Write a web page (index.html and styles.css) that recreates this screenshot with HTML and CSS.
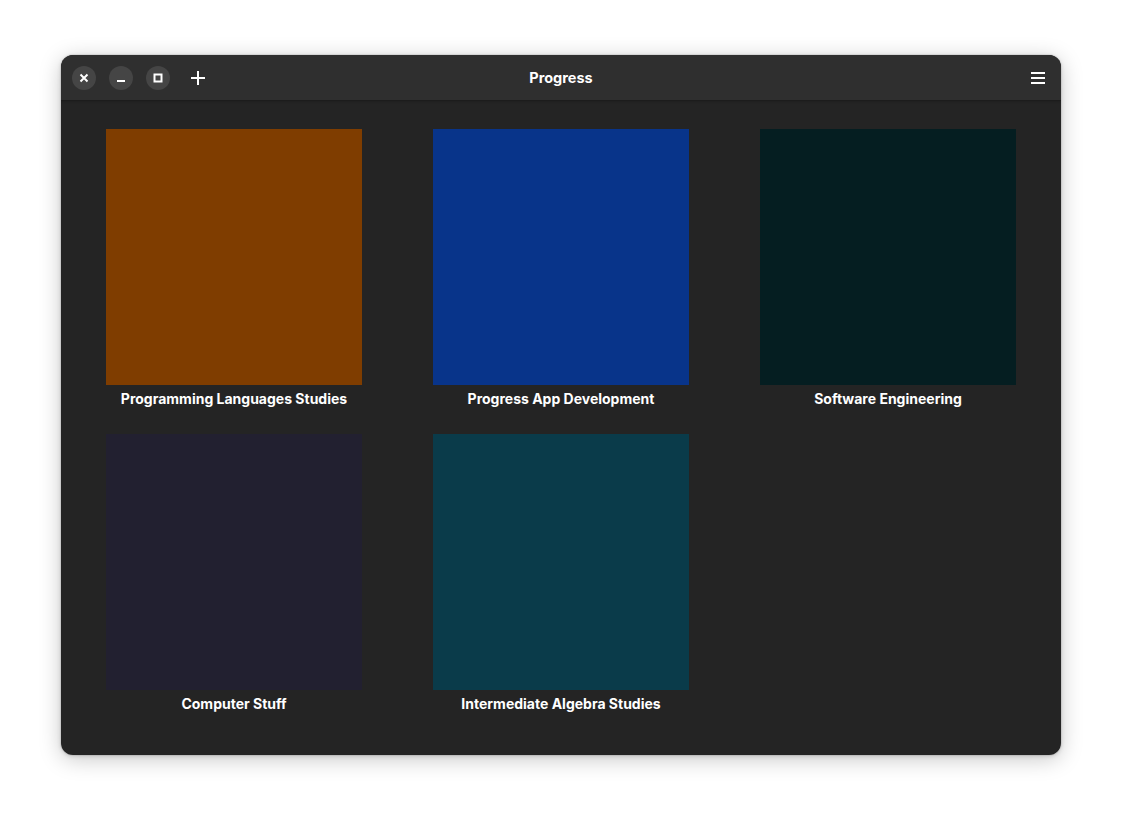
FILE: index.html
```html
<!DOCTYPE html>
<html>
<head>
<meta charset="utf-8">
<link rel="stylesheet" href="styles.css">
</head>
<body>
<div class="window">
  <header class="headerbar">
    <div class="left">
      <button class="wbtn" aria-label="Close">
        <svg width="24" height="24" viewBox="0 0 24 24"><path d="M8.5 8.5l7 7M15.5 8.5l-7 7" stroke="#fff" stroke-width="2" stroke-linecap="butt"/></svg>
      </button>
      <button class="wbtn" aria-label="Minimize">
        <svg width="24" height="24" viewBox="0 0 24 24"><rect x="8" y="14" width="8" height="2" fill="#fff"/></svg>
      </button>
      <button class="wbtn" aria-label="Maximize">
        <svg width="24" height="24" viewBox="0 0 24 24"><rect x="8.5" y="8.5" width="7" height="7" fill="none" stroke="#fff" stroke-width="2"/></svg>
      </button>
      <button class="plain" aria-label="Add">
        <svg width="16" height="16" viewBox="0 0 16 16"><path d="M8 1v14M1 8h14" stroke="#fff" stroke-width="2"/></svg>
      </button>
    </div>
    <div class="title">Progress</div>
    <div class="right">
      <button class="plain" aria-label="Menu">
        <svg width="16" height="16" viewBox="0 0 16 16"><path d="M1 3h14M1 8h14M1 13h14" stroke="#fff" stroke-width="2"/></svg>
      </button>
    </div>
  </header>
  <main class="grid">
    <div class="item"><div class="cover c1"></div><div class="label">Programming Languages Studies</div></div>
    <div class="item"><div class="cover c2"></div><div class="label">Progress App Development</div></div>
    <div class="item"><div class="cover c3"></div><div class="label">Software Engineering</div></div>
    <div class="item"><div class="cover c4"></div><div class="label">Computer Stuff</div></div>
    <div class="item"><div class="cover c5"></div><div class="label">Intermediate Algebra Studies</div></div>
  </main>
</div>
</body>
</html>
```
FILE: styles.css
```css
html, body {
  margin: 0;
  padding: 0;
  background: #ffffff;
  width: 1122px;
  height: 822px;
  overflow: hidden;
  font-family: Inter, "Noto Sans", sans-serif;
}
body {
  padding: 55px 0 0 61px;
  box-sizing: border-box;
}
.window {
  width: 1000px;
  height: 700px;
  border-radius: 12px;
  background: #242424;
  overflow: hidden;
  box-shadow: 0 4px 22px rgba(0,0,0,0.22), 0 1px 4px rgba(0,0,0,0.15), 0 0 0 1px rgba(0,0,0,0.06);
  display: flex;
  flex-direction: column;
}
.headerbar {
  height: 46px;
  flex: none;
  background: #2f2f2f;
  border-bottom: 1px solid #1c1c1c;
  box-shadow: 0 1px 2px rgba(0,0,0,0.15);
  display: flex;
  align-items: center;
  position: relative;
  padding: 0 11px 0 11px;
  box-sizing: border-box;
}
.left {
  display: flex;
  align-items: center;
  gap: 13px;
}
.wbtn {
  width: 24px;
  height: 24px;
  border-radius: 50%;
  border: none;
  padding: 0;
  background: #454545;
  display: flex;
  align-items: center;
  justify-content: center;
}
.wbtn svg { display: block; }
.plain {
  background: none;
  border: none;
  padding: 0;
  width: 24px;
  height: 24px;
  display: flex;
  align-items: center;
  justify-content: center;
}
.left .plain { margin-left: 3px; }
.title {
  position: absolute;
  left: 0;
  right: 0;
  text-align: center;
  color: #ffffff;
  font-weight: 700;
  font-size: 14.5px;
  pointer-events: none;
}
.right {
  margin-left: auto;
  display: flex;
  align-items: center;
}
.grid {
  display: grid;
  grid-template-columns: repeat(3, 327px);
  justify-content: center;
  row-gap: 26px;
  padding-top: 28px;
}
.item {
  display: flex;
  flex-direction: column;
  align-items: center;
}
.cover {
  width: 256px;
  height: 256px;
}
.label {
  margin-top: 5px;
  color: #ffffff;
  font-weight: 700;
  font-size: 14px;
  line-height: 18px;
}
.c1 { background: #7f3d00; }
.c2 { background: #08348a; }
.c3 { background: #051e21; }
.c4 { background: #222030; }
.c5 { background: #0a3b4a; }
```
